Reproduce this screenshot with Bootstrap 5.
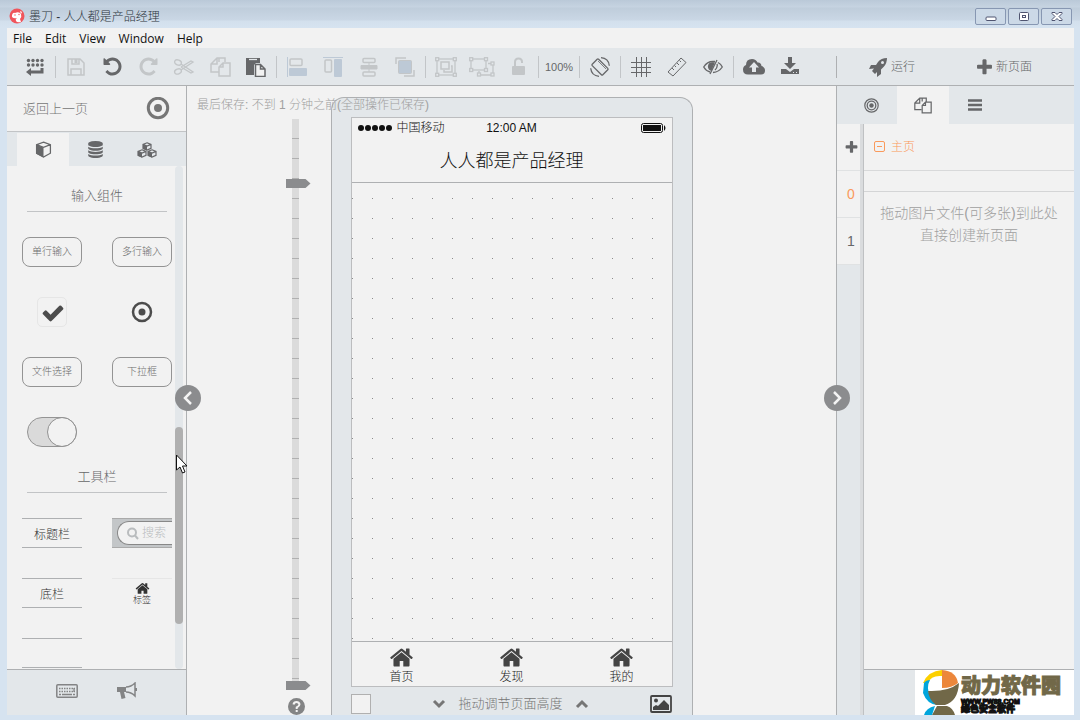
<!DOCTYPE html>
<html lang="zh-CN">
<head>
<meta charset="utf-8">
<meta name="viewport" content="width=device-width, initial-scale=1">
<title>墨刀 - 人人都是产品经理</title>
<link rel="stylesheet" href="https://cdn.jsdelivr.net/npm/bootstrap@5.3.0/dist/css/bootstrap.min.css">
<style>
:root{--frame:#d6e3f0;--bar:#e3e7ea;--page:#f2f2f2;--line:#aeb0b2;--ink:#666769;--soft:#c3c6c8;--blue:#bdc9d6;--hot:#fa9a5c}
html,body{height:100%}
body{font-family:"Liberation Sans","Noto Sans CJK SC",sans-serif;font-size:12px;font-weight:300;line-height:20px;background:var(--frame);color:var(--ink);overflow:hidden;padding:0 6px 5px 7px}
svg{display:block;fill:none;stroke:currentColor}
svg.solid,.solid{fill:currentColor;stroke:none}
svg.flat{stroke:none}
button{background:none;border:0;padding:0;color:inherit;font:inherit;line-height:inherit}
a{color:inherit;text-decoration:none}
.titlebar{height:28px;margin:0 -6px 0 -7px;padding:8px 8px 0 9px;color:#2c343c;background:linear-gradient(#bac9d8,#c6d3e1 7px,#bfcddb 8px,#cad7e5 20px,#d3e0ed 21px,#d6e3f0)}
.titlebar h1{font-size:12px;line-height:18px;margin:0;font-weight:300}
.winbtn{width:31px;height:17px;border:1px solid #8797b2;border-radius:2px;background:#ccd9e7;color:#4f5470}
.menus{height:20px;background:var(--page);padding:2px 0 0 6px;gap:13px;font-family:"Open Sans","Noto Sans",sans-serif;font-weight:400;color:#111}
.tools{height:38px;background:var(--bar);border-bottom:1px solid var(--line);padding-left:10px}
.tool{width:36px;height:36px;display:flex;align-items:center;justify-content:center}
.zoomlevel{font-size:11px}
.off{color:var(--soft)}
.split{width:5px;height:22px;flex:none;background:linear-gradient(#c2c5c8,#c2c5c8) 2px 0/1px 100% no-repeat}
.side-tools{width:238px;height:22px;border-left:1px solid var(--line);margin-top:1px}
.side-tools button{line-height:18px}
.left{width:180px;border-right:1px solid var(--line)}
.back{height:46px;border-bottom:1px solid #c2c4c6;padding:0 16px;font-size:13px;color:#767676}
.tabs{background:var(--bar);padding-left:10px}
.tabs button{width:52px;height:100%;display:flex;align-items:center;justify-content:center}
.tabs button.on{background:var(--page)}
.lefttabs{height:34px;padding-top:1px}
.parts{width:168px}
.parts h2{font-size:13px;line-height:20px;font-weight:300;text-align:center;width:140px;margin:0 0 25px 20px;padding:20px 0 5px;border-bottom:1px solid #c2c4c6}
.kit{display:grid;grid-template-columns:60px 60px;grid-auto-rows:30px;gap:30px;padding-left:15px}
.kit button{width:60px;height:30px;display:flex;align-items:center;justify-content:center}
.pill{border:1px solid #949494!important;border-radius:8px;font-size:10px;color:#6c6c6c}
.kit .strip{border-top:1px solid var(--line);border-bottom:1px solid var(--line);color:#333;padding-top:3px}
.tickbox{width:30px;height:30px;border:1px solid #e6e6e6;border-radius:5px;display:flex;align-items:center;justify-content:center;color:#4c4c4c;padding:2px 0 0 2px}
.toggle{width:50px;height:30px;border:1px solid #949494;border-radius:15px;background:#dadada;display:flex;justify-content:flex-end}
.toggle i{width:28px;height:28px;border-radius:50%;background:var(--page);outline:1px solid #949494}
.kit .searchbar{background:var(--soft);border-top:1px solid #aaa;border-bottom:1px solid #aaa;padding-left:5px}
.searchbar span{height:24px;width:55px;border:1px solid #888;border-right:0;border-radius:12px 0 0 12px;background:var(--page);color:#b9bcbe;display:flex;align-items:center;padding-left:8px;gap:3px;white-space:nowrap}
.kit .mini{flex-direction:column;font-size:9px;line-height:10px;color:#333;border-top:1px solid #e6e6e6}
.scrolltrack{width:8px;margin-right:3px;background:var(--bar);border-radius:4px}
.scrollthumb{top:51.8%;height:39.2%;left:0;right:0;background:#b0b0b0;border-radius:4px}
.foot{height:46px;background:var(--bar);border-top:1px solid var(--line)}
.leftfoot{padding-left:42px;gap:24px;color:#838485}
.leftfoot .tool{height:42px}
.stage{display:grid;grid-template-columns:1fr auto 1fr;min-width:0}
.saved{left:10px;top:9px;color:#a0a0a0;z-index:2;white-space:nowrap}
.rulercol{justify-self:end;margin:33px 19px 0 0;width:26px}
.ruler{width:7px;margin-left:6px;background:repeating-linear-gradient(#dbdbdb 0 19px,#b0b0b0 19px 20px)}
.knob{width:25px;height:9px;left:-6px;background:#8b8c8e;clip-path:polygon(0 0,80% 0,100% 50%,80% 100%,0 100%)}
.phone{width:362px;margin-top:11px;padding:19px 19px 0;background:var(--bar);border:1px solid var(--line);border-bottom:0;border-radius:13px 13px 0 0}
.screen{background:var(--page);border:1px solid #bcbdbf;color:#111}
.status{display:grid;grid-template-columns:1fr auto 1fr;align-items:center;height:20px;padding:0 6px}
.screen h2{font-size:18px;line-height:46px;height:45px;margin:0;text-align:center;font-weight:300;border-bottom:1px solid var(--line)}
.canvas{background:conic-gradient(from 0deg at 1px 1px,transparent 270deg,#8c8c8c 0) 0 15px/20px 20px}
.phonetabs{height:45px;border-top:1px solid var(--line);padding:5px 20px 0;color:#444}
.phonetabs a{width:60px;text-align:center;line-height:20px;color:#222}
.phonetabs svg{color:#444}
.pull{height:28px;padding-top:6px;color:#767676;font-size:13px}
.pull input{appearance:none;width:20px;height:20px;margin:0;border:1px solid #b0b0b0;background:var(--page)}
.right{width:238px;border-left:1px solid var(--line)}
.righttabs{height:38px;padding-left:8px}
.rail{width:27px;background:var(--bar);border-right:1px solid #bfc1c3;box-shadow:inset -3px 0 #dadcde;font-size:14px}
.rail button{display:flex;width:23px;height:47px;align-items:center;justify-content:center;background:var(--page);border-bottom:1px solid #e0e2e3;padding-left:5px}
.tree{height:47px;border-bottom:1px solid #d8d9da;color:var(--hot);padding-left:10px;gap:5px}
.drop{border-top:1px solid #d4d5d6;margin-top:20px;padding:10px 0;text-align:center;font-size:14px;line-height:22px;color:#a0a0a0;white-space:nowrap}
.fold{width:26px;height:26px;border-radius:50%;background:#8b8c8e!important;color:#f4f4f4!important;top:299px;z-index:3;display:flex;align-items:center;justify-content:center}
.fold-l{left:-12px}.fold-r{right:-14px}
.pointer{left:168px;top:368px;z-index:4}
.brandbox{width:159px;background:#fff;padding-left:8px;gap:2px}
.brandbox b{font-size:20px;line-height:24px;color:#716848;-webkit-text-stroke:1px #716848;font-weight:900;white-space:nowrap}
.brandbox small{font-size:9px;line-height:9px;color:#111;font-weight:900;-webkit-text-stroke:1px #111;white-space:nowrap}
.brandbox .site{font-size:7px;line-height:7px}
</style>
<script src="https://cdn.jsdelivr.net/npm/bootstrap@5.3.0/dist/js/bootstrap.bundle.min.js"></script>
</head>
<body class="d-flex flex-column">
<svg width="0" height="0" class="position-absolute" aria-hidden="true">
<symbol id="home" viewBox="0 0 1792 1792"><path d="M1472 992v480q0 26-19 45t-45 19h-384v-384h-256v384h-384q-26 0-45-19t-19-45v-480q0-1 .5-3t.5-3l575-474 575 474q1 2 1 6zm223-69l-62 74q-8 9-21 11h-3q-13 0-21-7l-692-577-692 577q-12 8-24 7-13-2-21-11l-62-74q-8-10-7-23.5t11-21.5l719-599q32-26 76-26t76 26l244 204v-195q0-14 9-23t23-9h192q14 0 23 9t9 23v408l219 182q10 8 11 21.5t-7 23.5z"/></symbol>
<symbol id="plus" viewBox="0 0 1792 1792"><path d="M1600 736v192q0 40-28 68t-68 28h-416v416q0 40-28 68t-68 28h-192q-40 0-68-28t-28-68v-416h-416q-40 0-68-28t-28-68v-192q0-40 28-68t68-28h416v-416q0-40 28-68t68-28h192q40 0 68 28t28 68v416h416q40 0 68 28t28 68z"/></symbol>
<symbol id="undo" viewBox="0 0 1792 1792"><path d="M1664 896q0 156-61 298t-164 245-245 164-298 61q-172 0-327-72.500t-264-204.500q-7-10-6.500-22.500t8.500-20.500l137-138q10-9 25-9 16 2 23 12 73 95 179 147t225 52q104 0 198.500-40.500t163.500-109.500 109.500-163.500 40.500-198.500-40.500-198.500-109.500-163.500-163.500-109.500-198.500-40.500q-98 0-188 35.500t-160 101.500l137 138q31 30 14 69-17 40-59 40h-448q-26 0-45-19t-19-45v-448q0-42 40-59 39-17 69 14l130 129q107-101 244.500-156.500t284.500-55.500q156 0 298 61t245 164 164 245 61 298z"/></symbol>
</svg>

<header class="titlebar d-flex justify-content-between">
  <div class="d-flex gap-1">
    <svg class="flat" width="16" height="16" viewBox="0 0 16 16"><circle cx="8" cy="8" r="7.500" fill="#f0555c"/><path d="M3 7q1-3 3-2 4-2 6 1 1 3-1 5l1 3q-4 1-5-1-1-2 1-3-3 1-5-1z" fill="#fff"/><circle cx="6" cy="7" r=".7" fill="#f0555c"/><circle cx="10" cy="6.500" r=".7" fill="#f0555c"/><path d="M11 3l2 1-1 2z" fill="#fff"/></svg>
    <h1>墨刀 - 人人都是产品经理</h1>
  </div>
  <div class="d-flex" style="gap:2px">
    <button class="winbtn" aria-label="最小化"><svg class="mx-auto" width="16" height="13" viewBox="0 0 16 13"><rect x="3" y="7" width="10" height="3.500" rx="1" fill="#fff"/></svg></button>
    <button class="winbtn" aria-label="最大化"><svg class="mx-auto" width="16" height="13" viewBox="0 0 16 13"><rect x="3.500" y="2.500" width="9" height="8" rx="1" fill="#fff"/><rect x="6.500" y="5.500" width="3" height="2"/></svg></button>
    <button class="winbtn" aria-label="关闭"><svg class="mx-auto" width="16" height="13" viewBox="0 0 16 13"><path d="M3 2.500h3l2 2 2-2h3v1L10 6.500l3 3v1h-3l-2-2-2 2H3v-1l3-3-3-3z" fill="#fff"/></svg></button>
  </div>
</header>

<nav class="menus d-flex align-items-center"><a href="#">File</a><a href="#">Edit</a><a href="#">View</a><a href="#">Window</a><a href="#">Help</a></nav>

<div class="tools d-flex align-items-center">
  <button class="tool" aria-label="组件"><svg width="20" height="20" viewBox="0 0 20 20"><g fill="currentColor" stroke="none"><circle cx="3.500" cy="3.500" r="1.700"/><circle cx="8" cy="3.500" r="1.700"/><circle cx="12.500" cy="3.500" r="1.700"/><circle cx="17" cy="3.500" r="1.700"/><circle cx="3.500" cy="8" r="1.700"/><circle cx="8" cy="8" r="1.700"/><circle cx="12.500" cy="8" r="1.700"/><circle cx="17" cy="8" r="1.700"/><path d="M1 15l5-4v8z"/></g><path d="M5 15h12v-4" stroke-width="3"/></svg></button>
  <span class="split"></span>
  <button class="tool off" aria-label="保存"><svg width="20" height="20" viewBox="0 0 20 20" stroke-width="1.500"><path d="M2 2h12l4 4v12H2zM6 2v5h7V2M5 18v-6h10v6"/><path d="M10 2v4" stroke-width="3"/></svg></button>
  <button class="tool" aria-label="撤销"><svg class="solid" width="21" height="21"><use href="#undo"/></svg></button>
  <button class="tool off" aria-label="重做"><svg class="solid" width="21" height="21" viewBox="0 0 21 21"><g transform="matrix(-1 0 0 1 21 0)"><use href="#undo" width="21" height="21"/></g></svg></button>
  <button class="tool off" aria-label="剪切"><svg width="22" height="20" viewBox="0 0 22 20" stroke-width="1.300"><ellipse cx="5" cy="5.500" rx="3.500" ry="2.500" transform="rotate(20 5 5.500)"/><ellipse cx="5" cy="14.500" rx="3.500" ry="2.500" transform="rotate(-20 5 14.500)"/><path d="M8 7l12 8-2 1-10-6M8 13l12-8-2-1-10 6"/></svg></button>
  <button class="tool off" aria-label="复制"><svg width="22" height="20" viewBox="0 0 22 20" stroke-width="1.500"><path d="M9 5V1h6v4M9 1H7L1 7v8h8M7 1v6H1" transform="translate(1)"/><path d="M14 6h7v13H10V10zM14 6v4h-4"/></svg></button>
  <button class="tool" aria-label="粘贴"><svg width="20" height="20" viewBox="0 0 20 20"><path d="M0 1h14v5h-4L8 8v10H0z" fill="currentColor" stroke="none"/><path d="M3 2.500h8" stroke="#e3e7ea" stroke-width="1.300"/><path d="M9.500 7.500h5l4.500 4.500v7.500H9.500zM14.500 7.500V12H19" fill="#f2f2f2" stroke-width="1.500"/></svg></button>
  <span class="split"></span>
  <button class="tool off" aria-label="左对齐"><svg width="20" height="20" viewBox="0 0 20 20"><path d="M.5 0v20" stroke="#bdc9d6"/><rect x="3" y="2" width="12" height="6.500" rx="1" stroke-width="1.500"/><rect x="2" y="11" width="18" height="8" rx="1" fill="#bdc9d6" stroke="none"/></svg></button>
  <button class="tool off" aria-label="顶对齐"><svg width="20" height="20" viewBox="0 0 20 20"><path d="M0 .5h20" stroke="#bdc9d6"/><rect x="2" y="3" width="6.500" height="12" rx="1" stroke-width="1.500"/><rect x="11" y="2" width="8" height="18" rx="1" fill="#bdc9d6" stroke="none"/></svg></button>
  <button class="tool off" aria-label="居中"><svg width="18" height="20" viewBox="0 0 18 20"><rect x="3" y="1.500" width="12" height="4" rx="1" stroke-width="1.500"/><path d="M1 8.500h16v3.500H1z" fill="currentColor"/><rect x="3" y="15" width="12" height="4" rx="1" stroke-width="1.500"/><path d="M9 5v10"/></svg></button>
  <button class="tool off" aria-label="图层"><svg width="20" height="20" viewBox="0 0 20 20" stroke="#bdc9d6"><rect x="3.500" y="3.500" width="13" height="13" rx="1" fill="#bdc9d6"/><path d="M1 7V1h10M19 13v6H9" stroke-width="1.500"/></svg></button>
  <span class="split"></span>
  <button class="tool off" aria-label="组合"><svg width="22" height="20" viewBox="0 0 22 20" stroke-width="1.300"><rect x="2" y="2" width="18" height="16"/><rect x="6" y="5" width="8" height="7" stroke-width="1.500"/><path d="M16 9h1v6H9v-2" stroke-width="1.500"/><g fill="#e3e7ea"><rect x=".7" y=".7" width="3" height="3"/><rect x="18.300" y=".7" width="3" height="3"/><rect x=".7" y="16.300" width="3" height="3"/><rect x="18.300" y="16.300" width="3" height="3"/></g></svg></button>
  <button class="tool off" aria-label="取消组合"><svg width="26" height="20" viewBox="0 0 26 20" stroke-width="1.300"><rect x="2" y="2" width="15" height="11"/><path d="M19 6.500h5V18H10v-4"/><g fill="#e3e7ea"><rect x=".7" y=".7" width="3" height="3"/><rect x="15.500" y=".7" width="3" height="3"/><rect x=".7" y="11.500" width="3" height="3"/><rect x="15.500" y="11.500" width="3" height="3"/><rect x="22" y="5" width="3" height="3"/><rect x="22" y="16" width="3" height="3"/><rect x="8.500" y="16" width="3" height="3"/></g></svg></button>
  <button class="tool off" aria-label="解锁"><svg width="18" height="20" viewBox="0 0 18 20"><rect x="3" y="9" width="13" height="9" rx="1" fill="currentColor" stroke="none"/><path d="M6 9V5q0-3.500 3.500-3.500T13 5v1" stroke-width="2"/></svg></button>
  <span class="split"></span>
  <button class="tool zoomlevel">100%</button>
  <span class="split"></span>
  <button class="tool" aria-label="旋转"><svg width="20" height="20" viewBox="0 0 20 20" stroke-width="1.300"><rect x="5.500" y="2.500" width="9" height="15" rx="1" transform="rotate(-45 10 10)"/><path d="M8 4l8 8" stroke-width=".8"/><path d="M11 .7q7.500.5 8.300 8M9 19.300q-7.500-.5-8.300-8"/></svg></button>
  <span class="split"></span>
  <button class="tool" aria-label="网格"><svg width="20" height="20" viewBox="0 0 20 20"><path d="M5.500 0v20M10.500 0v20M15.500 0v20M0 5.500h20M0 10.500h20M0 15.500h20"/></svg></button>
  <button class="tool" aria-label="标尺"><svg width="20" height="20" viewBox="0 0 20 20"><path d="M1 15L14 1l5 4.500L6 19zM5 11l2 2M7.500 8.500l1.500 1.500M10 6l2 2M12.500 3.500L14 5"/></svg></button>
  <button class="tool" aria-label="隐藏"><svg width="20" height="18" viewBox="0 0 20 18" stroke-width="1.300"><path d="M14 2L7 16M7 14Q3 13 .7 9 4 3.500 10 3.500h2M15 4.500Q18 6 19.300 9 16 14 10 14.500M14 6q1 3-2 6"/><path d="M11 5Q6 4 5.500 8.500 6 12 8 12z" fill="currentColor"/></svg></button>
  <span class="split"></span>
  <button class="tool" aria-label="上传"><svg class="solid" width="22" height="18" viewBox="0 0 22 18"><path fill-rule="evenodd" d="M5 16.500q-5 0-5-5Q0 8 3 7 3 1 9 1q4 0 5.500 3.500Q18 4 18.500 8 22 9 22 12.500q0 4-4 4zM11 4l-5 5.500h3V14h4V9.500h3z"/></svg></button>
  <button class="tool" aria-label="下载"><svg class="solid" width="20" height="20" viewBox="0 0 20 20"><path d="M8 0h4v6h4l-6 6-6-6h4zM1 12h5l4 3 4-3h5v5H1z"/><path d="M13 15.500h1m2 0h1" stroke="#e3e7ea" stroke-width="1"/></svg></button>
  <div class="side-tools d-flex align-items-center ms-auto flex-shrink-0">
    <button class="d-flex align-items-center" style="margin-left:31px;gap:3px"><svg class="solid" width="20" height="20" viewBox="0 0 20 20"><path fill-rule="evenodd" d="M19 1Q13 1 10 5L8 8H3l-2 4 5-.5L4 14l3 3 2-2v5l4-3v-4.500l3-3Q19 6 19 1zM14.500 4a1.500 1.500 0 1 1 0 3 1.500 1.500 0 1 1 0-3z"/></svg>运行</button>
    <button class="d-flex align-items-center" style="margin-left:60px;gap:2px"><svg class="solid" width="19" height="19"><use href="#plus"/></svg>新页面</button>
  </div>
</div>

<main class="d-flex flex-fill position-relative" style="min-height:0;background:var(--page)">
  <aside class="left d-flex flex-column flex-shrink-0">
    <div class="back d-flex align-items-center justify-content-between flex-shrink-0"><a href="#">返回上一页</a><svg width="24" height="24" viewBox="0 0 24 24"><circle cx="12" cy="11" r="9.700" stroke-width="3"/><circle cx="12" cy="11" r="4" class="solid"/></svg></div>
    <div class="tabs lefttabs d-flex flex-shrink-0">
      <button class="on" aria-label="组件"><svg width="17" height="17" viewBox="0 0 16 16"><path d="M8 1l6.500 2.500v8L8 15 1.500 11.500v-8zM1.500 3.500L8 6l6.500-2.500" stroke-width="1.200"/><path d="M1 3.500L8 6v9.500L1 12z" class="solid"/></svg></button>
      <button aria-label="数据"><svg class="solid" width="17" height="17" viewBox="0 0 1792 1792"><path d="M896 768q237 0 443-43t325-127v170q0 69-103 128t-280 93.500-385 34.500-385-34.500-280-93.500-103-128v-170q119 84 325 127t443 43zm0 768q237 0 443-43t325-127v170q0 69-103 128t-280 93.500-385 34.500-385-34.500-280-93.500-103-128v-170q119 84 325 127t443 43zm0-384q237 0 443-43t325-127v170q0 69-103 128t-280 93.500-385 34.500-385-34.500-280-93.500-103-128v-170q119 84 325 127t443 43zm0-1152q208 0 385 34.500t280 93.500 103 128v128q0 69-103 128t-280 93.500-385 34.500-385-34.500-280-93.500-103-128v-128q0-69 103-128t280-93.500 385-34.500z"/></svg></button>
      <button aria-label="组合"><svg width="20" height="16" viewBox="0 0 20 16"><g id="cb"><path d="M10 .8l4 1.600v4L10 8 6 6.400v-4zM6 2.400L10 4l4-1.600" stroke-width="1.200"/><path d="M6 2.400L10 4v4.500L6 6.700z" class="solid"/></g><use href="#cb" x="-5" y="7"/><use href="#cb" x="5" y="7"/></svg></button>
    </div>
    <div class="d-flex justify-content-between flex-fill overflow-hidden" style="min-height:0">
      <div class="parts">
        <h2>输入组件</h2>
        <div class="kit">
          <button class="pill">单行输入</button><button class="pill">多行输入</button>
          <button aria-label="复选框"><span class="tickbox"><svg class="solid" width="24" height="24" viewBox="0 0 1792 1792"><path d="M1671 566q0 40-28 68l-724 724-136 136q-28 28-68 28t-68-28l-136-136-362-362q-28-28-28-68t28-68l136-136q28-28 68-28t68 28l294 295 656-657q28-28 68-28t68 28l136 136q28 28 28 68z"/></svg></span></button>
          <button aria-label="单选框" style="color:#4c4c4c"><svg width="22" height="22" viewBox="0 0 22 22"><circle cx="11" cy="11" r="9" stroke-width="2.500"/><circle cx="11" cy="11" r="3.500" class="solid"/></svg></button>
          <button class="pill">文件选择</button><button class="pill">下拉框</button>
          <button aria-label="开关"><span class="toggle"><i></i></span></button>
        </div>
        <h2>工具栏</h2>
        <div class="kit">
          <button class="strip">标题栏</button>
          <button class="searchbar"><span><svg width="13" height="13" viewBox="0 0 13 13" stroke-width="2"><circle cx="6" cy="5.500" r="4"/><path d="M9 8.500l3 3.500"/></svg>搜索</span></button>
          <button class="strip">底栏</button>
          <button class="mini"><svg class="solid" width="15" height="13"><use href="#home" x="0" y="-1" width="15" height="15"/></svg>标签</button>
          <button class="strip" aria-label="工具栏"></button>
        </div>
      </div>
      <div class="scrolltrack position-relative flex-shrink-0"><div class="scrollthumb position-absolute"></div></div>
    </div>
    <div class="foot leftfoot d-flex flex-shrink-0">
      <button class="tool" aria-label="键盘"><svg width="22" height="14" viewBox="0 0 22 14"><rect x=".8" y=".8" width="20.400" height="12.400" rx="1" stroke-width="1.500"/><path d="M3 4.500h16M3 7.500h16" stroke-width="1.400" stroke-dasharray="1.500 1"/><path d="M3 10.500h2m1 0h10m1 0h2M18 4v4" stroke-width="1.300"/></svg></button>
      <button class="tool" aria-label="公告"><svg width="22" height="18" viewBox="0 0 22 18"><path d="M10 5q5 0 9-4v13q-4-4-9-4" stroke-width="1.500"/><path d="M1 5h9v5H8l1.500 6-4 1L4 10H1zM19 6h2v3h-2z" class="solid"/></svg></button>
    </div>
  </aside>

  <section class="stage flex-fill position-relative">
    <div class="saved position-absolute">最后保存: 不到 1 分钟之前(全部操作已保存)</div>
    <button class="fold fold-l position-absolute" aria-label="收起左栏"><svg width="12" height="14" viewBox="0 0 12 14" stroke-width="2.500"><path d="M9 1L3 7l6 6"/></svg></button>
    <button class="fold fold-r position-absolute" aria-label="收起右栏"><svg width="12" height="14" viewBox="0 0 12 14" stroke-width="2.500"><path d="M3 1l6 6-6 6"/></svg></button>
    <div class="rulercol d-flex flex-column">
      <div class="ruler flex-fill position-relative"><div class="knob position-absolute" style="top:60px"></div><div class="knob position-absolute bottom-0"></div></div>
      <button class="mt-2" aria-label="帮助" style="margin-left:2px"><svg class="flat" width="17" height="17" viewBox="0 0 17 17"><circle cx="8.500" cy="8.500" r="8.500" fill="#838485"/><path d="M5.500 6.500Q6 4 8.500 4t3 2.300Q11.500 8 8.700 9.500v1.500M8.700 12v2" stroke="#f2f2f2" stroke-width="2"/></svg></button>
    </div>
    <div class="phone d-flex flex-column">
      <div class="screen d-flex flex-column flex-fill">
        <div class="status">
          <div class="d-flex align-items-center gap-1"><svg class="solid" width="35" height="8" viewBox="0 0 35 8"><circle cx="3" cy="4" r="3"/><circle cx="10" cy="4" r="3"/><circle cx="17" cy="4" r="3"/><circle cx="24" cy="4" r="3"/><circle cx="31" cy="4" r="3"/></svg>中国移动</div>
          <div>12:00 AM</div>
          <svg class="ms-auto" width="25" height="10" viewBox="0 0 25 10"><rect x=".5" y=".5" width="21" height="9" rx="2"/><rect x="2" y="2" width="18" height="6" class="solid"/><path d="M23 2q3 3 0 6z" class="solid"/></svg>
        </div>
        <h2>人人都是产品经理</h2>
        <div class="canvas flex-fill"></div>
        <nav class="phonetabs d-flex justify-content-between">
          <a href="#"><svg class="solid mx-auto" width="23" height="20"><use href="#home" x="-1" y="-2" width="25" height="25"/></svg>首页</a>
          <a href="#"><svg class="solid mx-auto" width="23" height="20"><use href="#home" x="-1" y="-2" width="25" height="25"/></svg>发现</a>
          <a href="#"><svg class="solid mx-auto" width="23" height="20"><use href="#home" x="-1" y="-2" width="25" height="25"/></svg>我的</a>
        </nav>
      </div>
      <div class="pull d-flex align-items-center justify-content-between">
        <input type="checkbox" aria-label="背景色">
        <div class="d-flex align-items-center" style="gap:12px"><svg width="14" height="12" viewBox="0 0 14 12" stroke-width="3"><path d="M2 3l5 5 5-5"/></svg>拖动调节页面高度<svg width="14" height="12" viewBox="0 0 14 12" stroke-width="3"><path d="M2 9l5-5 5 5"/></svg></div>
        <button aria-label="图片" style="color:#444"><svg width="22" height="18" viewBox="0 0 22 18"><rect x="1" y="1" width="20" height="16" rx="1" stroke-width="1.800"/><circle cx="6" cy="5.500" r="2" class="solid"/><path d="M3 15v-3l3-2 2 1 6-6 5 5v5z" class="solid"/></svg></button>
      </div>
    </div>
  </section>

  <aside class="right d-flex flex-column flex-shrink-0">
    <div class="tabs righttabs d-flex flex-shrink-0">
      <button aria-label="交互"><svg width="15" height="15" viewBox="0 0 15 15"><circle cx="7.500" cy="7.500" r="6.700" stroke-width="1.200"/><circle cx="7.500" cy="7.500" r="4.300" stroke-width="1.300"/><circle cx="7.500" cy="7.500" r="2.200" class="solid"/></svg></button>
      <button class="on" aria-label="页面"><svg width="18" height="17" viewBox="0 0 22 20" stroke-width="1.500"><path d="M10 5V1h5v4M9 1H7L1 7v8h8M7 1v6H1M7 1h3M14 6h7v13H10V10zM14 6v4h-4"/></svg></button>
      <button aria-label="列表"><svg width="14" height="12" viewBox="0 0 14 12" stroke-width="3"><path d="M0 1.500h14M0 6h14M0 10.500h14" stroke-width="2.600"/></svg></button>
    </div>
    <div class="d-flex flex-fill">
      <div class="rail flex-shrink-0"><button aria-label="添加"><svg class="solid flex-shrink-0" width="15" height="15"><use href="#plus"/></svg></button><button style="color:var(--hot)">0</button><button>1</button></div>
      <div class="d-flex flex-column flex-fill" style="min-width:0">
        <div class="tree d-flex align-items-center"><svg width="12" height="12" viewBox="0 0 12 12"><rect x=".5" y=".5" width="10" height="10" rx="1.500"/><path d="M3 5.500h5"/></svg><a href="#">主页</a></div>
        <div class="drop flex-fill">拖动图片文件(可多张)到此处<br>直接创建新页面</div>
        <div class="foot d-flex justify-content-end">
          <div class="brandbox d-flex">
            <svg class="flat" width="36" height="45" viewBox="0 0 36 45"><path d="M0 13Q5 1 19 0v6Q8 5 5 13z" fill="#fcd000"/><path d="M19 0q14 1 16 13-6 5-16 5z" fill="#ec873b"/><path d="M1 13q2-3 6-3-4 7 0 16l7 9Q4 34 0 23z" fill="#00a5dc"/><path d="M5 21q20 1 31-8-1 18-14 22h-9Q6 30 5 21z" fill="#716848"/><path d="M14 36h10q6 2 8 9H9z" fill="#716848"/><path d="M12 36q-9 2-11 9h8z" fill="#00a5dc"/></svg>
            <div class="d-flex flex-column" style="padding-top:4px"><b>动力软件园</b><small class="site">WWW.PW88.COM</small><small>绿色安全软件</small></div>
          </div>
        </div>
      </div>
    </div>
  </aside>

  <svg class="pointer position-absolute" width="14" height="20" viewBox="0 0 14 20"><path d="M1.500 1v15l3.500-3 2.500 6 2.500-1-2.500-6H12z" fill="#fff" stroke="#111"/></svg>
</main>
</body>
</html>
